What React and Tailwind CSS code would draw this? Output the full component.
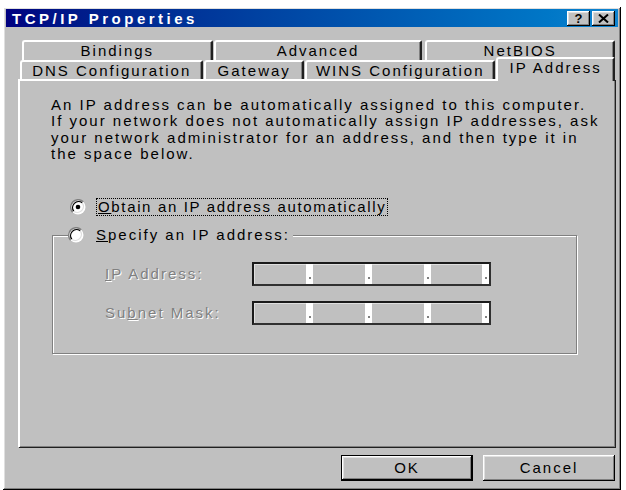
import React from 'react';

const raised =
  'bg-[#c0c0c0] shadow-[inset_-1px_-1px_0_#000,inset_1px_1px_0_#fff,inset_-2px_-2px_0_#808080,inset_2px_2px_0_#dfdfdf]';

const Radio = ({ checked }) => (
  <svg width="16" height="16" viewBox="0 0 16 16" className="shrink-0">
    <circle cx="8" cy="8" r="7.5" fill="#fff" />
    <path d="M13.3 2.7 A7.5 7.5 0 0 0 2.7 13.3" stroke="#808080" strokeWidth="1.5" fill="none" />
    <path d="M12.2 3.8 A6 6 0 0 0 3.8 12.2" stroke="#000" strokeWidth="1.3" fill="none" />
    <path d="M3.8 12.2 A6 6 0 0 0 12.2 3.8" stroke="#dfdfdf" strokeWidth="1.3" fill="none" />
    {checked && <circle cx="8" cy="8" r="2.3" fill="#000" />}
  </svg>
);

const Tab = ({ w, children, selected }) => (
  <div
    className={
      'flex justify-center rounded-tl-[3px] rounded-tr-[2px] border-l-2 border-t-2 border-r-2 border-white border-r-[#202020] bg-[#c0c0c0] shadow-[inset_-1px_0_0_#808080] ' +
      (selected ? 'relative z-10 -mt-[3px] h-[24px] pt-[1px]' : 'h-full pt-[1px]')
    }
    style={{ width: w }}
  >
    {children}
  </div>
);

const IpField = () => {
  const sep = (
    <div className="flex h-full w-[7px] items-end justify-center bg-white pb-[5px]">
      <div className="h-[2px] w-[2px] bg-[#808080]" />
    </div>
  );
  return (
    <div className="flex h-[24px] w-[239px] border-2 border-[#1a1a1a] border-b-[#303030] border-r-[#303030] shadow-[inset_1px_1px_0_#dfdfdf]">
      <div className="w-[52px]" />
      {sep}
      <div className="w-[52px]" />
      {sep}
      <div className="w-[52px]" />
      {sep}
      <div className="w-[51px]" />
      {sep}
    </div>
  );
};

const Disabled = ({ children }) => (
  <span className="text-[#808080] [text-shadow:1px_1px_0_#fff]">{children}</span>
);

export default function App() {
  return (
    <div className="h-[490px] w-[626px] overflow-hidden bg-white pt-[7px] pl-[3px] font-['Liberation_Sans',Arial,sans-serif] text-[15px] tracking-[2px] text-black">
      <div className={'h-[483px] w-[618px] px-[3px] pt-[2px] ' + raised}>
        {/* title bar */}
        <div className="flex h-[18px] items-center justify-between bg-linear-to-r from-[#000080] to-[#1084d0] pl-[6px] pr-[3px]">
          <span className="text-[15px] font-bold leading-none tracking-[3.5px] text-white">TCP/IP Properties</span>
          <div className="flex gap-[2px]">
            <div className={'flex h-[15px] w-[23px] items-center justify-center text-[13px] font-bold leading-none tracking-normal ' + raised}>
              ?
            </div>
            <div className={'flex h-[15px] w-[23px] items-center justify-center ' + raised}>
              <svg width="11" height="9" viewBox="0 0 11 9">
                <path d="M1 0.5 L10 8.5 M10 0.5 L1 8.5" stroke="#000" strokeWidth="2" />
              </svg>
            </div>
          </div>
        </div>

        <div className="pl-[12px] pr-[3px] pt-[13px]">
          {/* tabs back row */}
          <div className="ml-[4px] flex h-[20px] gap-[1px] leading-[16px]">
            <Tab w={191}>Bindings</Tab>
            <Tab w={209}>Advanced</Tab>
            <div className="w-[1px]" />
            <Tab w={190}>NetBIOS</Tab>
          </div>
          {/* tabs front row */}
          <div className="ml-[2px] flex h-[19px] items-start gap-[1px] leading-[16px]">
            <Tab w={184}>DNS Configuration</Tab>
            <Tab w={100}>Gateway</Tab>
            <Tab w={191}>WINS Configuration</Tab>
            <Tab w={119} selected>
              IP Address
            </Tab>
          </div>

          {/* panel */}
          <div className="h-[368px] w-[597px] border-l-2 border-t-2 border-white bg-[#c0c0c0] shadow-[inset_-1px_-1px_0_#808080,1px_1px_0_#202020]">
            <p className="whitespace-nowrap pl-[31px] pt-[16px] leading-[16.3px]">
              An IP address can be automatically assigned to this computer.
              <br />
              If your network does not automatically assign IP addresses, ask
              <br />
              your network administrator for an address, and then type it in
              <br />
              the space below.
            </p>

            <div className="mt-[36px] flex h-[18px] items-center pl-[50px]">
              <Radio checked />
              <span className="ml-[10px] border border-dotted border-black px-[1px] leading-[16px] tracking-[1.65px]">
                <u>O</u>btain an IP address automatically
              </span>
            </div>

            <div className="relative ml-[32px] mt-[19px] h-[119px] w-[525px] border border-[#808080] shadow-[inset_1px_1px_0_#fff,1px_1px_0_#fff]">
              <div className="absolute -top-[10px] left-[15px] flex items-center bg-[#c0c0c0] pr-[3px]">
                <Radio />
                <span className="ml-[12px] leading-[18px]">
                  <u>S</u>pecify an IP address:
                </span>
              </div>

              <div className="flex flex-col gap-[15px] pl-[52px] pt-[26px]">
                <div className="flex items-center">
                  <div className="w-[147px]">
                    <Disabled>
                      <u>I</u>P Address:
                    </Disabled>
                  </div>
                  <IpField />
                </div>
                <div className="flex items-center">
                  <div className="w-[147px]">
                    <Disabled>
                      Su<u>b</u>net Mask:
                    </Disabled>
                  </div>
                  <IpField />
                </div>
              </div>
            </div>
          </div>

          {/* buttons */}
          <div className="mt-[8px] flex justify-end gap-[10px]">
            <div className="flex h-[26px] w-[132px] items-center justify-center border border-black bg-[#c0c0c0] shadow-[inset_-1px_-1px_0_#000,inset_1px_1px_0_#fff,inset_-2px_-2px_0_#808080,inset_2px_2px_0_#dfdfdf]">
              OK
            </div>
            <div className={'flex h-[26px] w-[132px] items-center justify-center ' + raised}>Cancel</div>
          </div>
        </div>
      </div>
    </div>
  );
}
